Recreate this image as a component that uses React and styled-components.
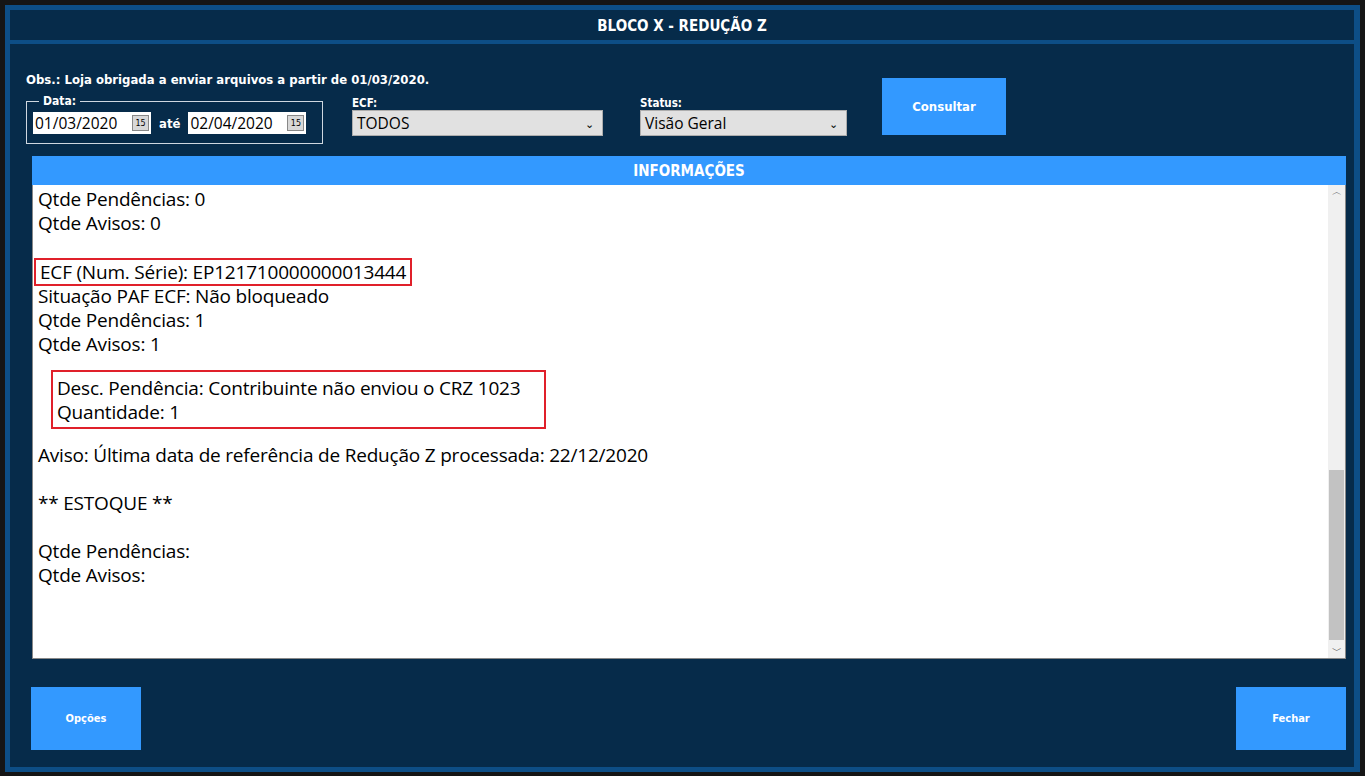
import React from "react";
import styled, { createGlobalStyle } from "styled-components";

const G = createGlobalStyle`
  html,body{margin:0;padding:0;background:#151515;}
  body{font-family:"DejaVu Sans Condensed","DejaVu Sans",sans-serif;}
`;
const Frame = styled.div`
  margin:5px 0 0 5px;width:1355px;height:767px;box-sizing:border-box;
  border:5px solid #0d4e86;border-right-width:6px;background:#062b4a;
  display:flex;flex-direction:column;
`;
const Title = styled.div`
  height:34px;display:flex;align-items:center;justify-content:center;padding-top:2px;box-sizing:border-box;
  color:#fff;font-weight:bold;font-size:15px;border-bottom:4px solid #0d4e86;
`;
const Body = styled.div`
  flex:1;padding:28px 8px 0 12px;display:flex;flex-direction:column;
`;
const Obs = styled.div`color:#fff;font-weight:bold;font-size:13px;margin-left:4px;`;
const Row = styled.div`display:flex;align-items:flex-start;margin-top:7px;`;
const Fieldset = styled.fieldset`
  margin:0 0 0 4px;padding:0 6px 5px 6px;border:1px solid #cfd8e0;width:297px;height:50px;box-sizing:border-box;
  display:flex;align-items:center;gap:8px;
  legend{color:#fff;font-weight:bold;font-size:12px;padding:0 4px;margin-left:6px;}
`;
const DateBox = styled.div`
  width:118px;height:22px;background:#fff;display:flex;align-items:center;justify-content:space-between;
  font-family:"Open Sans",sans-serif;font-size:15.5px;padding-left:2px;box-sizing:border-box;
`;
const Cal = styled.span`
  width:17px;height:16px;margin-right:2px;background:#d8d8d8;border:1px solid #888;box-sizing:border-box;
  font-size:8px;display:flex;align-items:center;justify-content:center;font-family:"DejaVu Sans",sans-serif;
`;
const Ate = styled.span`color:#fff;font-weight:bold;font-size:13px;`;
const Field = styled.div`
  margin-left:${p=>p.ml}px;display:flex;flex-direction:column;padding-top:2px;
  label{color:#fff;font-weight:bold;font-size:11.5px;height:14px;margin-bottom:0;}
`;
const Select = styled.div`
  width:${p=>p.w}px;height:26px;background:#e1e1e1;border:1px solid #adadad;box-sizing:border-box;
  display:flex;align-items:center;justify-content:space-between;padding:0 8px 0 4px;
  font-family:"Open Sans",sans-serif;font-size:15.5px;color:#000;
`;
const Btn = styled.button`
  width:${p=>p.w}px;height:${p=>p.h}px;background:#3399ff;border:none;color:#fff;
  font-family:"DejaVu Sans Condensed",sans-serif;font-weight:bold;font-size:${p=>p.fs}px;
`;
const InfoHead = styled.div`
  margin:12px 0 0 10px;height:29px;background:#3399ff;color:#fff;font-weight:bold;font-size:15px;
  display:flex;align-items:center;justify-content:center;
`;
const Area = styled.div`
  margin-left:10px;height:474px;background:#fff;display:flex;border:1px solid #888;border-top:none;box-sizing:border-box;
`;
const Text = styled.div`
  flex:1;padding:2px 0 0 5px;font-family:"Open Sans","Noto Sans",sans-serif;font-size:19px;line-height:24px;color:#000;
  letter-spacing:-0.2px;
`;
const Line = styled.div`height:24px;white-space:pre;`;
const Gap = styled.div`height:${p=>p.h||24}px;`;
const RedBox = styled.div`
  display:inline-block;border:2px solid #e0202a;padding:${p=>p.p};margin-left:${p=>p.ml}px;
`;
const Scroll = styled.div`
  width:17px;background:#f0f0f0;display:flex;flex-direction:column;justify-content:space-between;align-items:center;
  font-size:10px;color:#555;position:relative;
`;
const Thumb = styled.div`position:absolute;left:1px;right:1px;top:285px;height:170px;background:#c2c2c2;`;
const Footer = styled.div`display:flex;justify-content:space-between;margin:28px 0 0 9px;`;

export default function App(){
  return <><G/><Frame>
    <Title>BLOCO X - REDUÇÃO Z</Title>
    <Body>
      <Obs>Obs.: Loja obrigada a enviar arquivos a partir de 01/03/2020.</Obs>
      <Row>
        <Fieldset><legend>Data:</legend>
          <DateBox>01/03/2020<Cal>15</Cal></DateBox><Ate>até</Ate><DateBox>02/04/2020<Cal>15</Cal></DateBox>
        </Fieldset>
        <Field ml={29}><label>ECF:</label><Select w={251}>TODOS<span style={{fontSize:11}}>⌄</span></Select></Field>
        <Field ml={37}><label>Status:</label><Select w={207}>Visão Geral<span style={{fontSize:11}}>⌄</span></Select></Field>
        <div style={{marginLeft:35,marginTop:-16}}><Btn w={124} h={57} fs={13}>Consultar</Btn></div>
      </Row>
      <InfoHead>INFORMAÇÕES</InfoHead>
      <Area>
        <Text>
          <Line>Qtde Pendências: 0</Line>
          <Line>Qtde Avisos: 0</Line>
          <Gap/>
          <RedBox p="0 4px 0 4px" ml={-4} style={{height:24,marginTop:-1,marginBottom:-3}}>ECF (Num. Série): EP121710000000013444</RedBox>
          <Line>Situação PAF ECF: Não bloqueado</Line>
          <Line>Qtde Pendências: 1</Line>
          <Line>Qtde Avisos: 1</Line>
          <Gap h={14}/>
          <RedBox p="4px 24px 3px 4px" ml={13}><Line>Desc. Pendência: Contribuinte não enviou o CRZ 1023</Line><Line>Quantidade: 1</Line></RedBox>
          <Gap h={14}/>
          <Line>Aviso: Última data de referência de Redução Z processada: 22/12/2020</Line>
          <Gap/>
          <Line>** ESTOQUE **</Line>
          <Gap/>
          <Line>Qtde Pendências:</Line>
          <Line>Qtde Avisos:</Line>
        </Text>
        <Scroll><span>︿</span><Thumb/><span>﹀</span></Scroll>
      </Area>
      <Footer><Btn w={110} h={63} fs={11}>Opções</Btn><Btn w={110} h={63} fs={11}>Fechar</Btn></Footer>
    </Body>
  </Frame></>;
}
